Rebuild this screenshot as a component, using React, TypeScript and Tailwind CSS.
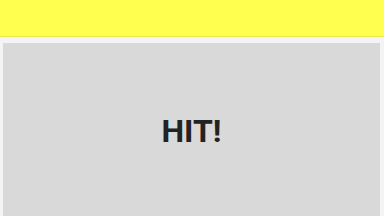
export default function App() {
    return (
        <div className="w-[384px] h-[216px] overflow-hidden bg-[#f4f4f6] flex flex-col font-['Roboto',sans-serif]">
            <div className="h-[37px] shrink-0 bg-[#ffff50] border-b border-[#e8e84a]" />
            <div className="flex-1 px-[3px] pt-[6px] pr-[4px]">
                <div className="h-full bg-[#d8d9d8] flex items-center justify-center">
                    <span className="text-[32px] font-bold text-[#222222] leading-none pt-[2px]">HIT!</span>
                </div>
            </div>
        </div>
    )
}
